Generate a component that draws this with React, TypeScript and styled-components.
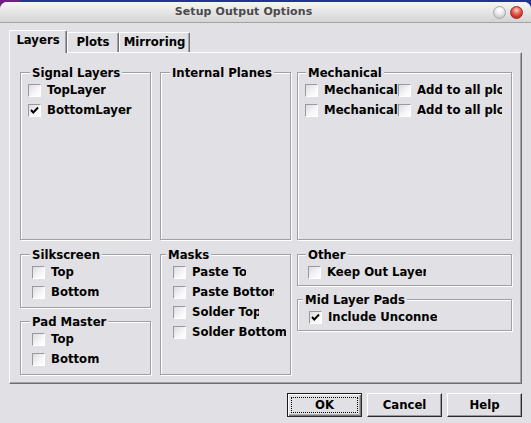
import React from "react";
import styled, { createGlobalStyle } from "styled-components";

const BG = "#e1e0e4";

const Global = createGlobalStyle`
  html, body { margin: 0; padding: 0; }
  body {
    background: ${BG};
    font-family: "DejaVu Sans", Verdana, sans-serif;
    color: #000;
  }
`;

const Desktop = styled.div`
  width: 531px;
  height: 423px;
  overflow: hidden;
  display: flex;
  flex-direction: column;
  background: linear-gradient(90deg, #6e1f86 0, #6e1f86 20px, #24319b 20px, #24319b 100%);
`;

const Window = styled.div`
  margin-top: 2px;
  flex: 1;
  display: flex;
  flex-direction: column;
  background: ${BG};
  border-radius: 7px 7px 0 0;
`;

const TitleBar = styled.div`
  height: 20px;
  display: flex;
  align-items: center;
  background: linear-gradient(#f5f5f5, #e4e4e4 55%, #d4d4d4);
  border-bottom: 1px solid #a3a3a3;
  border-radius: 7px 7px 0 0;
`;

const Title = styled.div`
  flex: 1;
  text-align: center;
  font-size: 11px;
  font-weight: bold;
  color: #4a4a4a;
  line-height: 20px;
  letter-spacing: 0.1px;
`;

const WinButtons = styled.div`
  width: 44px;
  display: flex;
  gap: 4px;
  padding-left: 6px;
  box-sizing: border-box;
`;

const Orb = styled.div<{ $red?: boolean }>`
  width: 13px;
  height: 13px;
  border-radius: 50%;
  box-sizing: border-box;
  border: 1px solid ${(p) => (p.$red ? "#9a2a22" : "#a8a8a8")};
  background: ${(p) =>
    p.$red
      ? "radial-gradient(circle at 50% 30%, #ffd8d0 0, #f07a6c 30%, #d2382a 65%, #a81d14 100%)"
      : "radial-gradient(circle at 50% 30%, #ffffff 0, #f0f0f0 35%, #d0d0d0 70%, #bcbcbc 100%)"};
`;

const Body = styled.div`
  flex: 1;
  display: flex;
  flex-direction: column;
  padding: 7px 9px 0 9px;
`;

const TabStrip = styled.div`
  height: 22px;
  display: flex;
  align-items: flex-end;
`;

const Tab = styled.div<{ $active?: boolean; $w: number }>`
  box-sizing: border-box;
  width: ${(p) => p.$w}px;
  height: ${(p) => (p.$active ? 23 : 20)}px;
  margin-bottom: ${(p) => (p.$active ? -1 : 0)}px;
  position: relative;
  z-index: ${(p) => (p.$active ? 2 : 1)};
  background: ${BG};
  border-top: 1px solid #ffffff;
  border-left: 1px solid #ffffff;
  border-right: 1px solid #6f6f6f;
  border-radius: 2px 2px 0 0;
  box-shadow: inset -1px 0 0 #a3a2a6;
  padding-top: 2px;
  font-size: 11.7px;
  font-weight: bold;
  line-height: 14px;
  text-align: center;
`;

const Panel = styled.div`
  box-sizing: border-box;
  width: 513px;
  height: 332px;
  background: ${BG};
  border-top: 1px solid #ffffff;
  border-left: 1px solid #ffffff;
  border-right: 1px solid #6f6f6f;
  border-bottom: 1px solid #6f6f6f;
  box-shadow: inset -1px -1px 0 #a3a2a6;
  padding: 19px 0 0 10px;
  display: flex;
`;

const Column = styled.div<{ $w: number; $ml?: number }>`
  width: ${(p) => p.$w}px;
  margin-left: ${(p) => p.$ml ?? 0}px;
  display: flex;
  flex-direction: column;
`;

const Group = styled.div<{ $h: number; $mt?: number }>`
  box-sizing: border-box;
  height: ${(p) => p.$h}px;
  margin-top: ${(p) => p.$mt ?? 0}px;
  border: 1px solid #a09fa4;
  box-shadow: inset 1px 1px 0 #ffffff, 1px 1px 0 #ffffff;
  display: flex;
  flex-direction: column;
  align-items: flex-start;
`;

const Caption = styled.div<{ $ml: number }>`
  margin: -7px 0 0 ${(p) => p.$ml}px;
  padding: 0 2px;
  background: ${BG};
  font-size: 11.7px;
  font-weight: bold;
  line-height: 14px;
  white-space: nowrap;
`;

const Row = styled.div<{ $pl: number }>`
  height: 20px;
  padding-left: ${(p) => p.$pl}px;
  display: flex;
  align-items: center;
`;

const CheckItem = styled.div<{ $w?: number }>`
  display: flex;
  align-items: center;
  width: ${(p) => (p.$w ? `${p.$w}px` : "auto")};
  overflow: hidden;
  flex: none;
  white-space: nowrap;
`;

const Box = styled.span`
  box-sizing: border-box;
  width: 13px;
  height: 13px;
  flex: none;
  border-top: 1px solid #9a999d;
  border-left: 1px solid #9a999d;
  border-right: 1px solid #ffffff;
  border-bottom: 1px solid #ffffff;
  background: linear-gradient(135deg, #dcdbdf 0, #f4f4f6 55%, #ffffff 100%);
  display: flex;
  align-items: center;
  justify-content: center;
`;

const Label = styled.span`
  margin-left: 6px;
  font-size: 11.7px;
  font-weight: bold;
  line-height: 14px;
`;

const ButtonRow = styled.div`
  display: flex;
  justify-content: flex-end;
  gap: 5px;
  margin-top: 9px;
`;

const Button = styled.div<{ $default?: boolean }>`
  box-sizing: border-box;
  width: 75px;
  height: 24px;
  background: ${BG};
  border-top: 1px solid ${(p) => (p.$default ? "#1a1a1a" : "#ffffff")};
  border-left: 1px solid ${(p) => (p.$default ? "#1a1a1a" : "#ffffff")};
  border-right: 1px solid #2a2a2a;
  border-bottom: 1px solid #2a2a2a;
  box-shadow: ${(p) =>
    p.$default
      ? "inset 1px 1px 0 #ffffff, inset -1px -1px 0 #7a7a7a, inset -2px -2px 0 #b0b0b0"
      : "inset -1px -1px 0 #9a999d"};
  display: flex;
  align-items: center;
  justify-content: center;
  padding: 3px;
  font-size: 11.7px;
  font-weight: bold;
`;

const Focus = styled.div`
  flex: 1;
  align-self: stretch;
  border: 1px dotted #000;
  display: flex;
  align-items: center;
  justify-content: center;
`;

const Tick = () => (
  <svg width="9" height="9" viewBox="0 0 9 9">
    <polyline points="1,4 3.3,6.5 8,1.5" fill="none" stroke="#000" strokeWidth="1.9" />
  </svg>
);

const Check = ({ label, checked, w }: { label: string; checked?: boolean; w?: number }) => (
  <CheckItem $w={w}>
    <Box>{checked && <Tick />}</Box>
    <Label>{label}</Label>
  </CheckItem>
);

export default function App() {
  return (
    <>
      <Global />
      <Desktop>
        <Window>
          <TitleBar>
            <Title>Setup Output Options</Title>
            <WinButtons>
              <Orb />
              <Orb $red />
            </WinButtons>
          </TitleBar>
          <Body>
            <TabStrip>
              <Tab $active $w={58}>Layers</Tab>
              <Tab $w={52}>Plots</Tab>
              <Tab $w={71}>Mirroring</Tab>
            </TabStrip>
            <Panel>
              <Column $w={131}>
                <Group $h={168}>
                  <Caption $ml={9}>Signal Layers</Caption>
                  <Row $pl={7}><Check label="TopLayer" /></Row>
                  <Row $pl={7}><Check label="BottomLayer" checked /></Row>
                </Group>
                <Group $h={54} $mt={14}>
                  <Caption $ml={9}>Silkscreen</Caption>
                  <Row $pl={11}><Check label="Top" /></Row>
                  <Row $pl={11}><Check label="Bottom" /></Row>
                </Group>
                <Group $h={54} $mt={13}>
                  <Caption $ml={9}>Pad Master</Caption>
                  <Row $pl={11}><Check label="Top" /></Row>
                  <Row $pl={11}><Check label="Bottom" /></Row>
                </Group>
              </Column>
              <Column $w={131} $ml={9}>
                <Group $h={168}>
                  <Caption $ml={9}>Internal Planes</Caption>
                </Group>
                <Group $h={121} $mt={14}>
                  <Caption $ml={5}>Masks</Caption>
                  <Row $pl={12}><Check label="Paste Top" w={73} /></Row>
                  <Row $pl={12}><Check label="Paste Bottom" w={101} /></Row>
                  <Row $pl={12}><Check label="Solder Top" w={86} /></Row>
                  <Row $pl={12}><Check label="Solder Bottom" w={113} /></Row>
                </Group>
              </Column>
              <Column $w={215} $ml={6}>
                <Group $h={168}>
                  <Caption $ml={8}>Mechanical</Caption>
                  <Row $pl={7}>
                    <Check label="Mechanical 1" w={93} />
                    <Check label="Add to all plots" w={104} />
                  </Row>
                  <Row $pl={7}>
                    <Check label="Mechanical 2" w={93} />
                    <Check label="Add to all plots" w={104} />
                  </Row>
                </Group>
                <Group $h={32} $mt={14}>
                  <Caption $ml={8}>Other</Caption>
                  <Row $pl={10}><Check label="Keep Out Layer" w={118} /></Row>
                </Group>
                <Group $h={32} $mt={13}>
                  <Caption $ml={5}>Mid Layer Pads</Caption>
                  <Row $pl={11}><Check label="Include Unconnected" checked w={128} /></Row>
                </Group>
              </Column>
            </Panel>
            <ButtonRow>
              <Button $default><Focus>OK</Focus></Button>
              <Button>Cancel</Button>
              <Button>Help</Button>
            </ButtonRow>
          </Body>
        </Window>
      </Desktop>
    </>
  );
}
